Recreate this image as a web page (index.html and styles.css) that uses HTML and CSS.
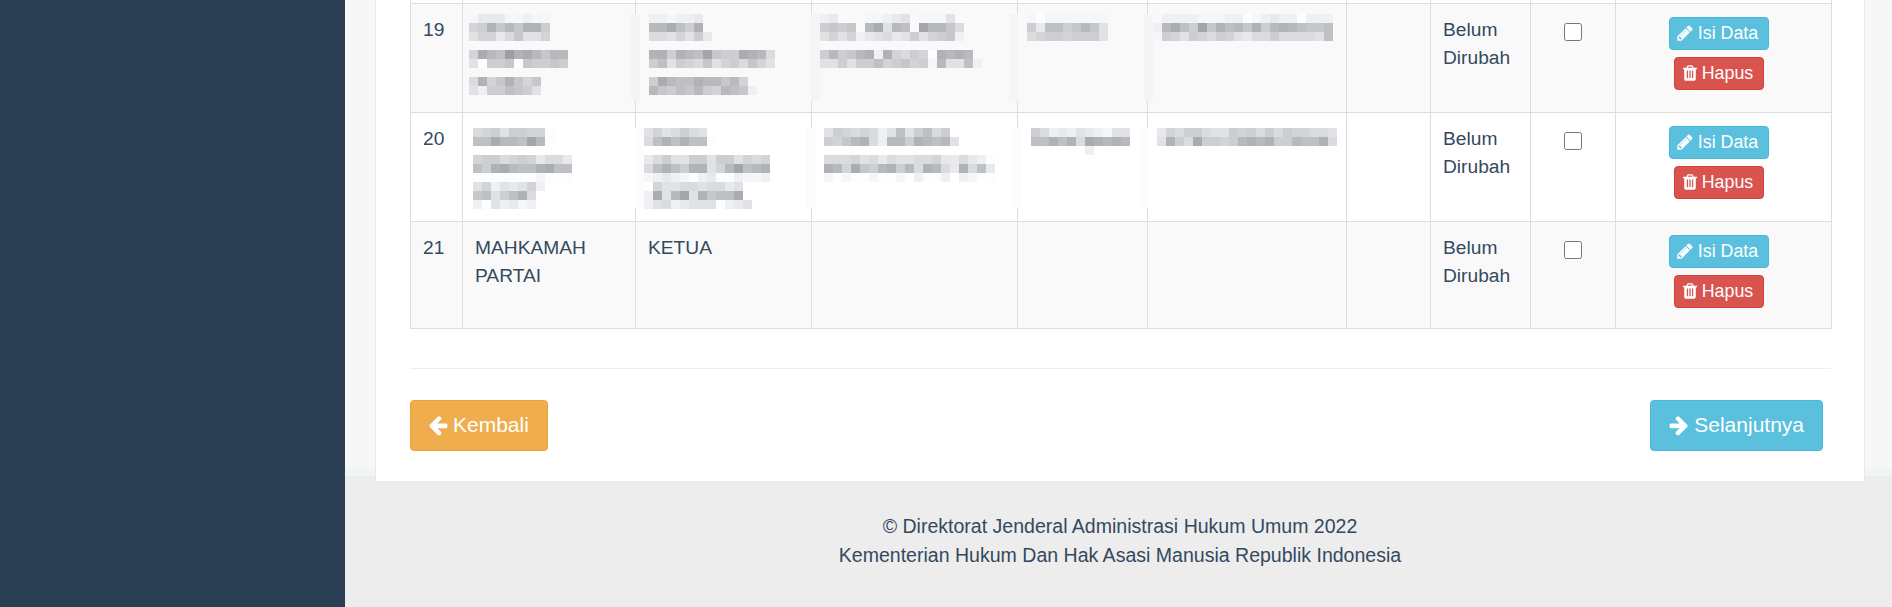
FILE: index.html
```html
<!DOCTYPE html>
<html lang="en">
<head>
    <meta charset="UTF-8">
    <title>Pengurus</title>
    <link rel="stylesheet" href="styles.css">
</head>
<body>
    <svg class="icon-defs" width="0" height="0">
        <symbol id="i-pencil" viewBox="0 0 1792 1792"><path d="M491 1536l91-91-235-235-91 91v107h128v128h107zm523-928q0-22-22-22-10 0-17 7l-542 542q-7 7-7 17 0 22 22 22 10 0 17-7l542-542q7-7 7-17zm-54-192l416 416-832 832h-416v-416zm683 96q0 53-37 90l-166 166-416-416 166-165q36-38 90-38 53 0 91 38l235 234q37 39 37 91z"/></symbol>
        <symbol id="i-trash" viewBox="0 0 1792 1792"><path d="M704 1376v-704q0-14-9-23t-23-9h-64q-14 0-23 9t-9 23v704q0 14 9 23t23 9h64q14 0 23-9t9-23zm256 0v-704q0-14-9-23t-23-9h-64q-14 0-23 9t-9 23v704q0 14 9 23t23 9h64q14 0 23-9t9-23zm256 0v-704q0-14-9-23t-23-9h-64q-14 0-23 9t-9 23v704q0 14 9 23t23 9h64q14 0 23-9t9-23zm-544-992h448l-48-117q-7-9-17-11h-317q-10 2-17 11zm928 32v64q0 14-9 23t-23 9h-96v948q0 83-47 143.5t-113 60.5h-832q-66 0-113-58.5t-47-141.5v-952h-96q-14 0-23-9t-9-23v-64q0-14 9-23t23-9h309l70-167q15-37 54-63t79-26h320q40 0 79 26t54 63l70 167h309q14 0 23 9t9 23z"/></symbol>
        <symbol id="i-left" viewBox="0 0 1792 1792"><path d="M1664 896v128q0 53-32.5 90.5t-84.5 37.5h-704l293 294q38 36 38 90t-38 90l-75 76q-37 37-90 37-52 0-91-37l-651-652q-37-37-37-90 0-52 37-91l651-650q38-38 91-38 52 0 90 38l75 74q38 38 38 91t-38 91l-293 293h704q52 0 84.5 37.5t32.5 90.5z"/></symbol>
        <symbol id="i-right" viewBox="0 0 1792 1792"><path d="M1600 960q0 54-37 91l-651 651q-39 37-91 37-51 0-90-37l-75-75q-38-38-38-91t38-91l293-293h-704q-52 0-84.5-37.5t-32.5-90.5v-128q0-53 32.5-90.5t84.5-37.5h704l-293-294q-38-36-38-90t38-90l75-75q38-38 90-38 53 0 91 38l651 651q37 35 37 90z"/></symbol>
    </svg>

    <aside class="sidebar"></aside>

    <div class="right-col">
        <div class="content">
            <main class="panel">
                <table class="data-table">
                    <colgroup>
                        <col class="col-no">
                        <col class="col-name">
                        <col class="col-role">
                        <col class="col-addr">
                        <col class="col-phone">
                        <col class="col-mail">
                        <col class="col-extra">
                        <col class="col-status">
                        <col class="col-check">
                        <col class="col-action">
                    </colgroup>
                    <tbody>
                        <tr class="row-cut">
                            <td></td><td></td><td></td><td></td><td></td><td></td><td></td><td></td><td></td><td></td>
                        </tr>
                        <tr class="row-odd">
                            <td>19</td>
                            <td class="blur-cell" id="m19-2"></td>
                            <td class="blur-cell" id="m19-3"></td>
                            <td class="blur-cell" id="m19-4"></td>
                            <td class="blur-cell" id="m19-5"></td>
                            <td class="blur-cell" id="m19-6"></td>
                            <td></td>
                            <td>Belum Dirubah</td>
                            <td class="check-cell"><input type="checkbox"></td>
                            <td class="action-cell">
                                <div class="row-actions">
                                    <button class="btn btn-sm btn-info"><svg class="icon-pencil"><use href="#i-pencil"/></svg>Isi Data</button>
                                    <button class="btn btn-sm btn-danger"><svg class="icon-trash"><use href="#i-trash"/></svg>Hapus</button>
                                </div>
                            </td>
                        </tr>
                        <tr>
                            <td>20</td>
                            <td class="blur-cell" id="m20-2"></td>
                            <td class="blur-cell" id="m20-3"></td>
                            <td class="blur-cell" id="m20-4"></td>
                            <td class="blur-cell" id="m20-5"></td>
                            <td class="blur-cell" id="m20-6"></td>
                            <td></td>
                            <td>Belum Dirubah</td>
                            <td class="check-cell"><input type="checkbox"></td>
                            <td class="action-cell">
                                <div class="row-actions">
                                    <button class="btn btn-sm btn-info"><svg class="icon-pencil"><use href="#i-pencil"/></svg>Isi Data</button>
                                    <button class="btn btn-sm btn-danger"><svg class="icon-trash"><use href="#i-trash"/></svg>Hapus</button>
                                </div>
                            </td>
                        </tr>
                        <tr class="row-odd">
                            <td>21</td>
                            <td>MAHKAMAH PARTAI</td>
                            <td>KETUA</td>
                            <td></td>
                            <td></td>
                            <td></td>
                            <td></td>
                            <td>Belum Dirubah</td>
                            <td class="check-cell"><input type="checkbox"></td>
                            <td class="action-cell">
                                <div class="row-actions">
                                    <button class="btn btn-sm btn-info"><svg class="icon-pencil"><use href="#i-pencil"/></svg>Isi Data</button>
                                    <button class="btn btn-sm btn-danger"><svg class="icon-trash"><use href="#i-trash"/></svg>Hapus</button>
                                </div>
                            </td>
                        </tr>
                    </tbody>
                </table>

                <hr class="divider">

                <div class="form-nav">
                    <button class="btn btn-lg btn-warning"><svg class="icon-arrow"><use href="#i-left"/></svg>Kembali</button>
                    <button class="btn btn-lg btn-info btn-next"><svg class="icon-arrow"><use href="#i-right"/></svg>Selanjutnya</button>
                </div>
            </main>
        </div>

        <footer class="page-footer">
            <div>© Direktorat Jenderal Administrasi Hukum Umum 2022</div>
            <div>Kementerian Hukum Dan Hak Asasi Manusia Republik Indonesia</div>
        </footer>
    </div>

    <script src="script.js"></script>
</body>
</html>
```
FILE: styles.css
```css
* {
    box-sizing: border-box;
}

html, body {
    height: 100%;
}

body {
    margin: 0;
    display: flex;
    height: 607px;
    overflow: hidden;
    font-family: "Liberation Sans", Arial, sans-serif;
    font-size: 19.2px;
    line-height: 28px;
    color: #34495e;
    background-color: #f7f7f7;
}

.icon-defs {
    position: absolute;
}

.sidebar {
    width: 345px;
    flex-shrink: 0;
    background-color: #2a3f54;
}

.right-col {
    flex: 1;
    display: flex;
    flex-direction: column;
    min-width: 0;
}

.content {
    padding: 0 27px 0 30px;
    background-color: #f7f7f7;
    border-bottom: 8px solid #f1f4f4;
}

.panel {
    position: relative;
    z-index: 1;
    margin-bottom: -14px;
    padding: 0 33px 30px 34px;
    background-color: white;
    border: 1px solid #e6e9ed;
    border-top: none;
}

.data-table {
    width: 1421px;
    table-layout: fixed;
    border-collapse: collapse;
}

.col-no { width: 52px; }
.col-name { width: 173px; }
.col-role { width: 176px; }
.col-addr { width: 206px; }
.col-phone { width: 130px; }
.col-mail { width: 199px; }
.col-extra { width: 84px; }
.col-status { width: 100px; }
.col-check { width: 85px; }
.col-action { width: 216px; }

.data-table td {
    padding: 12px 13px 13px 12px;
    border: 1px solid #ddd;
    vertical-align: top;
}

.row-odd {
    background-color: #f9f9f9;
}

.data-table .row-cut td {
    height: 3px;
    padding: 0;
    border-top: none;
}

.data-table .blur-cell {
    padding: 13px 0;
}

.data-table .check-cell,
.data-table .action-cell {
    padding-top: 13px;
}

.mosaic {
    display: block;
    overflow: visible;
}

.mosaic-tall {
    height: 87px;
    margin-top: -3px;
    margin-bottom: -2px;
}

.mosaic-short {
    height: 81px;
    margin-top: 2px;
    margin-bottom: -1px;
}

.check-cell {
    text-align: center;
}

.check-cell input {
    display: block;
    width: 18px;
    height: 18px;
    margin: 6px auto 0;
}

.row-actions {
    display: flex;
    flex-direction: column;
    align-items: center;
    gap: 7px;
    padding-right: 8px;
    padding-bottom: 7px;
}

.btn {
    display: inline-flex;
    align-items: center;
    justify-content: center;
    border: 1px solid transparent;
    border-radius: 4px;
    color: white;
    font-family: inherit;
    cursor: pointer;
}

.btn svg {
    fill: white;
    flex-shrink: 0;
}

.btn-sm {
    height: 33px;
    padding: 0 10px 0 6px;
    font-size: 17.83px;
}

.btn-lg {
    height: 51px;
    padding: 0 18px 0 16px;
    font-size: 21px;
}

.btn-info {
    background-color: #5bc0de;
    border-color: #46b8da;
}

.btn-danger {
    background-color: #d9534f;
    border-color: #d43f3a;
}

.btn-warning {
    background-color: #f0ad4e;
    border-color: #eea236;
}

.icon-pencil {
    width: 18px;
    height: 18px;
    margin-right: 4px;
}

.icon-trash {
    width: 18px;
    height: 18px;
    margin-right: 3px;
}

.icon-arrow {
    width: 22px;
    height: 22px;
    margin-right: 4px;
}

.divider {
    height: 1px;
    margin: 39px 0 31px;
    border: none;
    background-color: #eee;
}

.form-nav {
    display: flex;
    justify-content: space-between;
}

.btn-next {
    margin-right: 8px;
    padding-left: 17px;
}

.page-footer {
    flex: 1;
    padding: 36px 0 0 3px;
    text-align: center;
    font-size: 19.55px;
    line-height: 29px;
    background-color: #ededed;
}
```
FILE: script.js
```js
// pixelated (censored) cell contents: one char per 9px block, '.' is empty
const BLOCK = 9;

const mosaics = [
    { id: 'm19-2', x: 469, tall: true, rows: ['dbbbddcdd', '873646337', 'a88b96aa8', '', '82450324644', 'ae776e67767', '', '93863686', 'ac77567a'] },
    { id: 'm19-3', x: 649, strip: 631, tall: true, rows: ['ccdccb', '442573', '99a8a7b', '', '33734516772349', '75a7896a87968a', '', '72455344648', '46756478456c'] },
    { id: 'm19-4', x: 820, strip: 811, tall: true, rows: ['cb...ddcba.ddda', '7676.42a45.14469', 'a8a8cba9ba7a876c', '', '747643c38978e3434', 'aa7a77587687d4aa5c'] },
    { id: 'm19-5', x: 1027, strip: 1009, tall: true, rows: ['deddddddd', '7b557646a', '98778777a'] },
    { id: 'm19-6', x: 1153, strip: 1144, tall: true, rows: ['.ccccdddccedcbcceccc', 'c4257163546374345665', 'd78a78978ab9979999a5'] },
    { id: 'm20-2', x: 473, rows: ['987a7788e', '55244514e', '', '8779878b99b', '57324553255', 'eeeeeeedeee', 'a8caba8c', '65a7539', 'ceacbdc'] },
    { id: 'm20-3', x: 644, strip: 635, rows: ['a8a979a', '9535355e', '', 'b97aa77a77a898', '9535733a841543', 'dcbcdecbeecddc', '.8aa99a99ba', 'c2a41a36552', 'ca9cbaaaecba'] },
    { id: 'm20-4', x: 824, strip: 806, rows: ['a78989ca5a7597', '786439c4473454a', '', '9998a9b9aa998bb9bce', '34826743749349b395b', 'dedeedeedeceec.cdee'] },
    { id: 'm20-5', x: 1031, strip: 1013, rows: ['79cbcabcdaa', '55353923434', '......c'] },
    { id: 'm20-6', x: 1157, strip: 1139, rows: ['b89779aa78797978899a', 'a3792778743437745539'] }
];

function blockColor(level) {
    const v = Math.round(158 + parseInt(level, 16) * 6.8);
    return 'rgb(' + (v - 2) + ',' + v + ',' + Math.min(v + 3, 255) + ')';
}

function addRect(svg, x, y, w, h, fill) {
    const rect = document.createElementNS('http://www.w3.org/2000/svg', 'rect');
    rect.setAttribute('x', x);
    rect.setAttribute('y', y);
    rect.setAttribute('width', w);
    rect.setAttribute('height', h);
    rect.setAttribute('fill', fill);
    svg.appendChild(rect);
}

mosaics.forEach(function(m) {
    const cell = document.getElementById(m.id);
    const left = m.strip !== undefined ? m.strip : m.x;
    const offset = m.x - left;
    const longest = Math.max.apply(null, m.rows.map(function(r) { return r.length; }));

    const svg = document.createElementNS('http://www.w3.org/2000/svg', 'svg');
    svg.setAttribute('class', 'mosaic ' + (m.tall ? 'mosaic-tall' : 'mosaic-short'));
    svg.setAttribute('width', offset + longest * BLOCK);
    svg.style.marginLeft = (left - cell.getBoundingClientRect().left - cell.clientLeft) + 'px';

    if (m.strip !== undefined) {
        const stripColor = m.tall ? '#f5f5f5' : '#fcfcfc';
        addRect(svg, 0, 0, BLOCK, m.tall ? 87 : 80, stripColor);
    }

    m.rows.forEach(function(row, y) {
        row.split('').forEach(function(ch, x) {
            if (ch !== '.') {
                addRect(svg, offset + x * BLOCK, y * BLOCK, BLOCK, BLOCK, blockColor(ch));
            }
        });
    });
    cell.appendChild(svg);
});
```
